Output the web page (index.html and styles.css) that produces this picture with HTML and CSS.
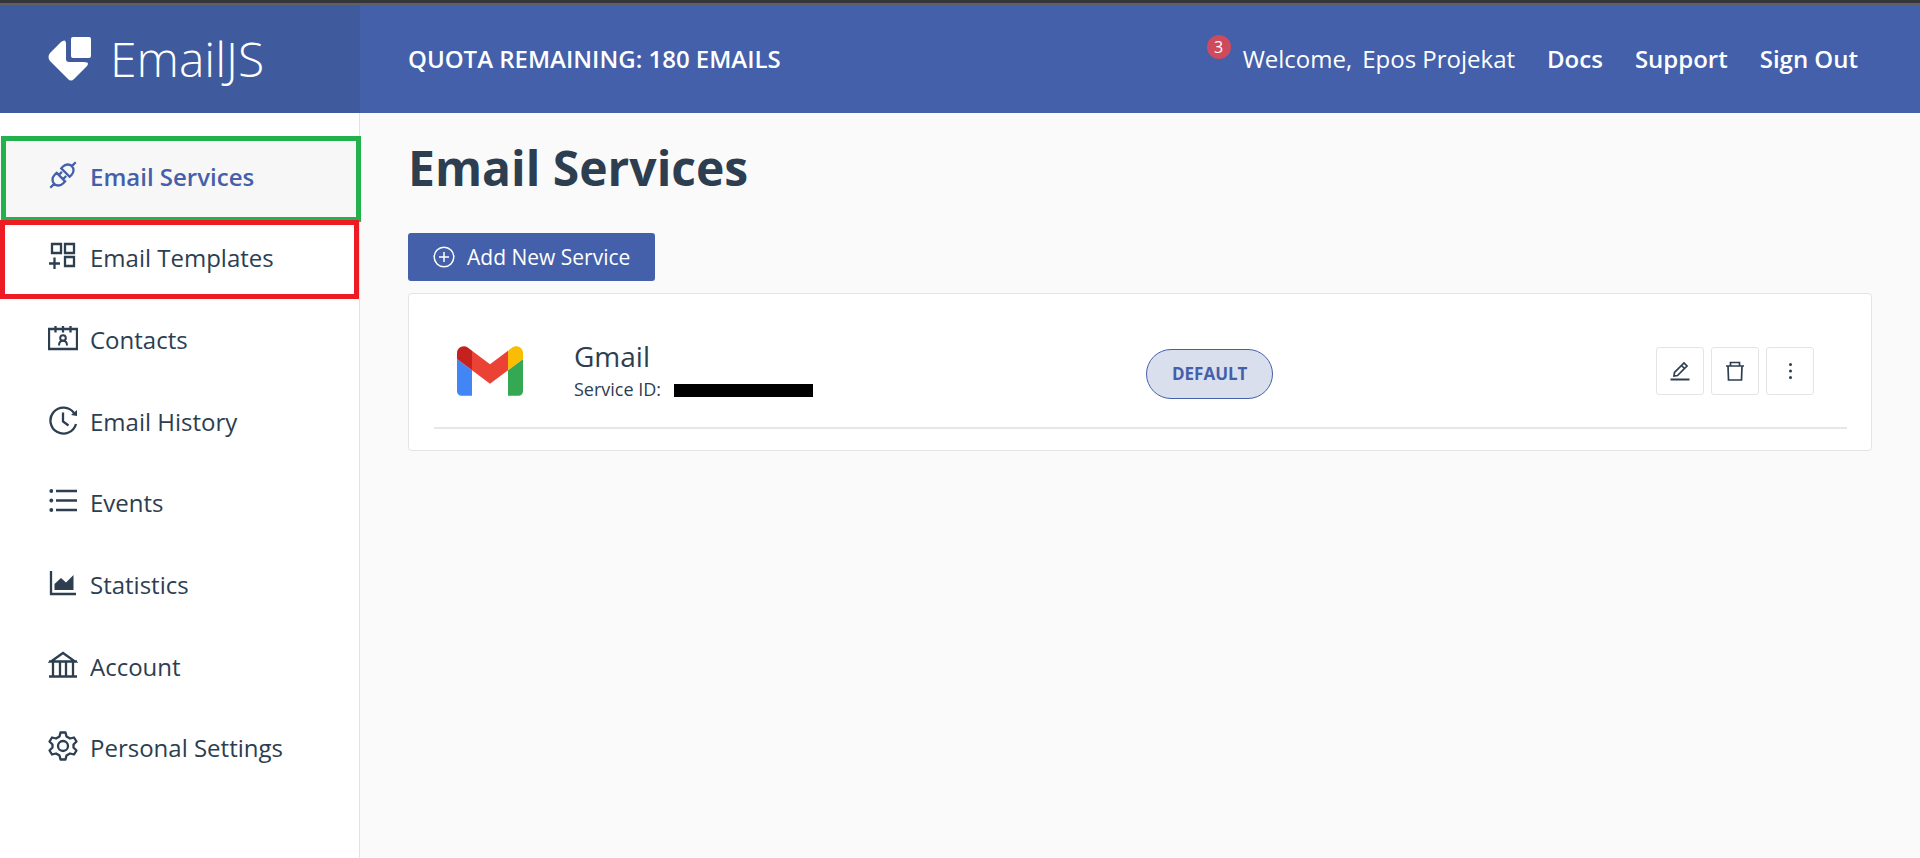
FILE: index.html
```html
<!DOCTYPE html>
<html lang="en">
<head>
<meta charset="utf-8">
<title>Email Services - EmailJS</title>
<link rel="stylesheet" href="styles.css">
</head>
<body>
<header class="header">
  <a class="brand" href="#">
    <svg class="brand-mark" viewBox="0 0 44 44" aria-hidden="true"><rect x="23" y="0" width="20" height="21" rx="2"/><path d="M13 5Q18 1 18 7V22Q18 25 21 25H36Q42 25 39 29L26 42Q23 45 20 42L2 24Q-1 20 2 16Z"/></svg>
    <span class="brand-name">EmailJS</span>
  </a>
  <div class="topbar">
    <span class="quota">QUOTA REMAINING: 180 EMAILS</span>
    <nav class="user-nav">
      <div class="user"><span class="badge">3</span><span>Welcome,</span><a href="#">Epos Projekat</a></div>
      <a class="strong" href="#">Docs</a>
      <a class="strong" href="#">Support</a>
      <a class="strong" href="#">Sign Out</a>
    </nav>
  </div>
</header>
<div class="layout">
  <aside class="sidebar">
    <nav>
      <ul class="menu">
        <li class="mark-green"><a class="menu-link active" href="#"><svg class="icon" viewBox="0 0 30 30"><g transform="rotate(45 15 15)"><path d="M15-3V2.500M8 11.500H22M9 11.500V9A6 6.500 0 0 1 21 9V11.500M8 18H22M9 18V21A6 6.500 0 0 0 21 21V18M15 27.500V33M12 13.500V18M18 13.500V18"/></g></svg>Email Services</a></li>
        <li class="mark-red"><a class="menu-link" href="#"><svg class="icon" viewBox="0 0 30 30"><path d="M4 3H13V12H4ZM17 3H26V12H17ZM17 16H26V25H17ZM6.500 16.500V28M1 22.500H12"/></svg>Email Templates</a></li>
        <li><a class="menu-link" href="#"><svg class="icon" viewBox="0 0 30 30"><path d="M1 6H29V26H1ZM7.500 3V9.500M15 3V9.500M22.500 3V9.500"/><circle cx="15" cy="15" r="2.800" stroke-width="2"/><path stroke-width="2" d="M11 22.500Q11 17.800 15 17.800T19 22.500"/></svg>Contacts</a></li>
        <li><a class="menu-link" href="#"><svg class="icon" viewBox="0 0 30 30"><path d="M26 8A13 13 0 1 0 28 19M15 7.500V16.500L20.500 20.500"/><path class="solid" d="M29 5V11L23 10Z"/></svg>Email History</a></li>
        <li><a class="menu-link" href="#"><svg class="icon" viewBox="0 0 30 30"><path d="M8 5H29M8 14.500H29M8 24H29"/><g class="solid"><circle cx="3.300" cy="5" r="1.900"/><circle cx="3.300" cy="14.500" r="1.900"/><circle cx="3.300" cy="24" r="1.900"/></g></svg>Events</a></li>
        <li><a class="menu-link" href="#"><svg class="icon" viewBox="0 0 30 30"><path d="M3 3V26H28"/><path class="solid" d="M6.500 22V16L13 10L18 14.500L25.500 7V22Z"/></svg>Statistics</a></li>
        <li><a class="menu-link" href="#"><svg class="icon" viewBox="0 0 30 30"><path d="M1 26.500H29M3 11.500L15 3L27 11.500ZM1 11.500H29M5 11.500V26M12 11.500V26M18 11.500V26M25 11.500V26"/></svg>Account</a></li>
        <li><a class="menu-link" href="#"><svg class="icon" viewBox="0 0 30 30"><circle cx="15" cy="15" r="5"/><path stroke-linejoin="round" d="M12.500 1.500H17.500L18.500 5.500L22 7.500L26 6.500L28.500 10.500L25.500 13.500V16.500L28.500 19.500L26 23.500L22 22.500L18.500 24.500L17.500 28.500H12.500L11.500 24.500L8 22.500L4 23.500L1.500 19.500L4.500 16.500V13.500L1.500 10.500L4 6.500L8 7.500L11.500 5.500Z"/></svg>Personal Settings</a></li>
      </ul>
    </nav>
  </aside>
  <main class="main">
    <h1 class="title">Email Services</h1>
    <button class="add" type="button"><svg class="add-icon" viewBox="0 0 22 22"><circle cx="11" cy="11" r="9.800"/><path d="M11 6V16M6 11H16"/></svg>Add New Service</button>
    <section class="card">
      <article class="service">
        <svg class="gmail" viewBox="52 42 88 66" role="img" aria-label="Gmail"><path fill="#4285f4" d="M58 108h14V74L52 59v43c0 3.320 2.690 6 6 6"/><path fill="#34a853" d="M120 108h14c3.320 0 6-2.690 6-6V59l-20 15"/><path fill="#fbbc04" d="M120 48v26l20-15v-8c0-7.420-8.470-11.650-14.400-7.200"/><path fill="#ea4335" d="M72 74V48l24 18 24-18v26L96 92"/><path fill="#c5221f" d="M52 51v8l20 15V48l-5.600-4.200c-5.940-4.450-14.400-.22-14.400 7.200"/></svg>
        <div>
          <h2 class="service-name">Gmail</h2>
          <p class="service-id">Service ID: <span class="redacted"></span></p>
        </div>
        <div class="service-side">
          <span class="pill">DEFAULT</span>
          <div class="actions">
            <button class="action" type="button" aria-label="Edit"><svg class="action-icon" viewBox="0 0 20 20"><path d="M4 15L4.500 11.500L14 2L17 5L7.500 14.500ZM11.500 4.500L14.500 7.500"/><path stroke-width="2" d="M.5 18.500H19.500"/></svg></button>
            <button class="action" type="button" aria-label="Delete"><svg class="action-icon" viewBox="0 0 20 20"><path d="M1 5H19M3 5L3.500 19H16.500L17 5M5.500 5V1.500H14.500V5"/></svg></button>
            <button class="action" type="button" aria-label="More"><svg class="action-icon" viewBox="0 0 20 20"><g class="solid"><circle cx="10.500" cy="3.500" r="1.500"/><circle cx="10.500" cy="10" r="1.500"/><circle cx="10.500" cy="16.500" r="1.500"/></g></svg></button>
          </div>
        </div>
      </article>
    </section>
  </main>
</div>
</body>
</html>
```

FILE: styles.css
```css
* { box-sizing: border-box; }

body {
  margin: 0;
  min-height: 100vh;
  display: flex;
  flex-direction: column;
  background: #fafafa;
  color: #2c3e50;
  font-family: "Open Sans", sans-serif;
  font-size: 24px;
  line-height: 32px;
}

a { color: inherit; text-decoration: none; }
h1, h2, p, ul { margin: 0; padding: 0; }
button { font-family: inherit; cursor: pointer; }

svg { fill: none; stroke: currentColor; flex: none; }
.solid { fill: currentColor; stroke: none; }

/* Header */
.header {
  display: flex;
  border-top: 3px solid #35363a;
  background: #4460aa;
  color: #fff;
}
.brand {
  width: 360px;
  height: 110px;
  padding-left: 48px;
  display: flex;
  align-items: center;
  gap: 18px;
  border-top: 2px solid #5f6063;
  background: #3f5a9d;
}
.brand-mark { width: 44px; height: 44px; fill: currentColor; stroke: none; }
.brand-name { font-size: 48px; font-weight: 300; line-height: 60px; }
.topbar {
  flex: 1;
  padding: 0 62px 0 48px;
  display: flex;
  align-items: center;
  justify-content: space-between;
  border-top: 2px solid #5f6063;
}
.quota, .strong { font-weight: 600; }
.user-nav { display: flex; gap: 32px; }
.user { position: relative; display: flex; gap: 10px; }
.badge {
  position: absolute;
  right: 100%;
  top: -8px;
  margin-right: 12px;
  width: 24px;
  height: 24px;
  border-radius: 50%;
  background: #cf4a5b;
  font-size: 16px;
  line-height: 24px;
  text-align: center;
}

/* Sidebar */
.layout { flex: 1; display: flex; }
.sidebar {
  width: 360px;
  padding-top: 23px;
  border-right: 1px solid #e3e3e3;
  background: #fff;
}
.menu {
  height: 653px;
  display: grid;
  grid-template-rows: repeat(8, 1fr);
  list-style: none;
}
.menu li { position: relative; display: grid; }
.menu-link { padding-left: 48px; display: flex; align-items: center; gap: 12px; }
.menu-link.active { background: #f7f7f7; color: #4460aa; font-weight: 600; }
.icon { width: 30px; height: 30px; margin-bottom: 4px; stroke-width: 2.3; }
.mark-green::after, .mark-red::after {
  content: "";
  position: absolute;
  pointer-events: none;
}
.mark-green::after { inset: 0 -2px -4px 1px; border: 5px solid #22b14c; }
.mark-red::after { inset: 2px 0 0; border: 5px solid #ed1c24; z-index: 1; }

/* Content */
.main { flex: 1; padding: 21px 48px; }
.title { margin-bottom: 31px; font-size: 48px; font-weight: 700; line-height: 68px; }
.add {
  height: 48px;
  padding: 0 25px;
  display: flex;
  align-items: center;
  gap: 12px;
  border: 0;
  border-radius: 3px;
  background: #4460aa;
  color: #fff;
  font-size: 21px;
}
.add-icon { width: 22px; height: 22px; stroke-width: 1.5; }
.card {
  margin-top: 12px;
  padding: 0 24px 21px 25px;
  border: 1px solid #e3e4e6;
  border-radius: 4px;
  background: #fff;
}
.service {
  padding: 44px 0 23px 23px;
  display: grid;
  grid-template-columns: 117px 572fr 701fr;
  align-items: center;
  border-bottom: 2px solid #e6e7e8;
}
.gmail { width: 66px; height: 50px; stroke: none; }
.service-name { font-size: 28px; font-weight: 500; line-height: 36px; }
.service-id { display: flex; align-items: center; gap: 13px; font-size: 18px; line-height: 30px; }
.redacted { width: 139px; height: 13px; margin-top: 2px; background: #000; }
.service-side {
  padding: 6px 33px 0 0;
  display: flex;
  align-items: center;
  justify-content: space-between;
}
.pill {
  padding: 0 25px;
  border: 1px solid #4460aa;
  border-radius: 25px;
  background: #dadfed;
  color: #4460aa;
  font-size: 17px;
  font-weight: 700;
  line-height: 48px;
}
.actions { display: flex; gap: 7px; padding-bottom: 6px; }
.action {
  width: 48px;
  height: 48px;
  padding: 0;
  display: grid;
  place-items: center;
  border: 1px solid #e3e4e6;
  border-radius: 3px;
  background: #fff;
  color: #2c3e50;
}
.action-icon { width: 20px; height: 20px; stroke-width: 1.7; }
```
